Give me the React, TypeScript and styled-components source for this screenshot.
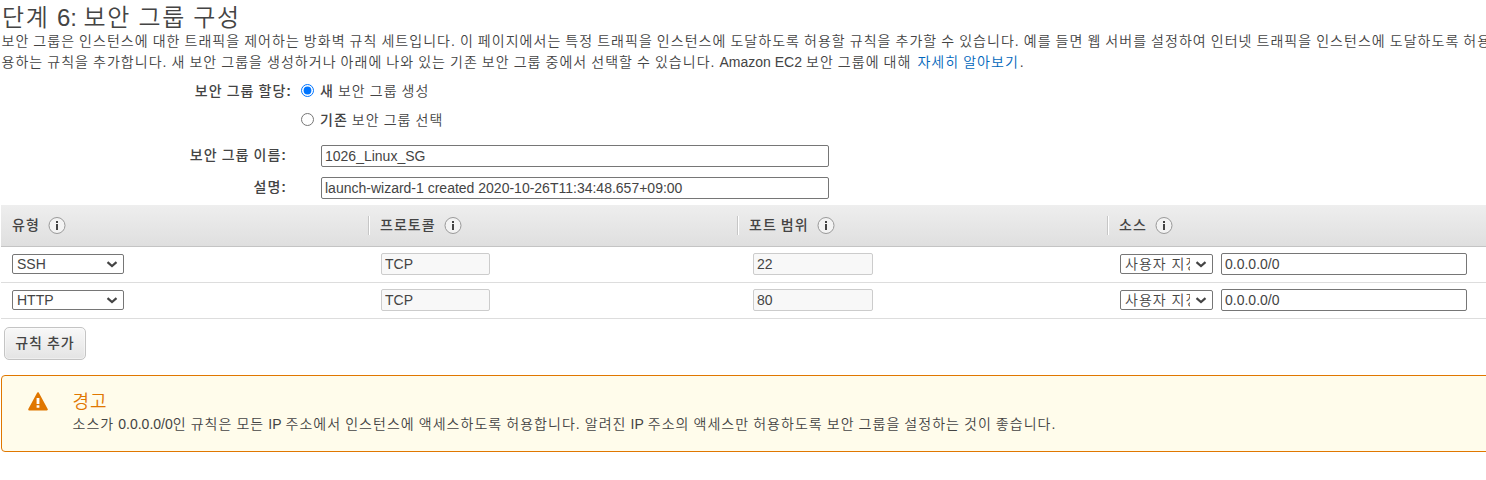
import React from "react";
import styled, { createGlobalStyle } from "styled-components";

const GlobalStyle = createGlobalStyle`
  * { box-sizing: border-box; }
  body {
    margin: 0;
    background: #fff;
    overflow: hidden;
    color: #444;
    font-family: "Liberation Sans", "Noto Sans CJK KR", sans-serif;
    font-size: 14px;
    font-weight: 350;
    letter-spacing: 1.04px;
    word-spacing: -0.94px;
  }
`;

const Page = styled.main`
  width: 1486px;
  height: 480px;
  overflow: hidden;
`;

const Latin = styled.span`
  letter-spacing: 0;
  word-spacing: 0;
`;

const Title = styled.h1`
  margin: 0;
  padding: 4px 0 0 2px;
  height: 31px;
  font-size: 24px;
  line-height: 27px;
  font-weight: 350;
  letter-spacing: 1.65px;
  word-spacing: -0.9px;
`;

const Line = styled.p`
  margin: 0;
  padding-left: 1.5px;
  line-height: 21px;
  white-space: nowrap;
`;

const Link = styled.a`
  color: #0066bb;
  margin: 0 1px 0 2px;
  text-decoration: none;
`;

const Form = styled.form`
  height: 132px;
  padding-top: 4px;
`;

const Field = styled.div<{ $height: number; $label: number; $gap: number }>`
  display: grid;
  grid-template-columns: ${(p) => p.$label}px auto;
  column-gap: ${(p) => p.$gap}px;
  align-items: center;
  justify-content: start;
  height: ${(p) => p.$height}px;
`;

const Label = styled.label<{ $lift?: number }>`
  font-weight: 500;
  text-align: right;
  line-height: 20px;
  padding-bottom: ${(p) => p.$lift ?? 0}px;
`;

const Choice = styled.label`
  display: flex;
  align-items: center;
  line-height: 20px;
  white-space: pre;
`;

const ChoiceText = styled.span`
  padding-bottom: 2px;
`;

const Strong = styled.b`
  font-weight: 500;
`;

const Colon = styled(Latin)`
  font-weight: 700;
`;

const Radio = styled.input`
  width: 13px;
  height: 13px;
  margin: 0 6px 2px 0;
`;

const Input = styled.input<{ $width: number }>`
  width: ${(p) => p.$width}px;
  height: 22px;
  padding: 1px 3px;
  border: 1px solid #767676;
  border-radius: 2px;
  background: #fff;
  color: #444;
  font: 14px "Liberation Sans", sans-serif;
  &:disabled {
    background: #f8f8f8;
    border-color: #ccc;
  }
`;

const SelectBox = styled.span<{ $width: number }>`
  position: relative;
  display: block;
  width: ${(p) => p.$width}px;
  height: 20px;
`;

const SelectControl = styled.select<{ $korean?: boolean }>`
  appearance: none;
  display: block;
  width: 100%;
  height: 20px;
  padding: 0 ${(p) => (p.$korean ? 22 : 18)}px 0 4px;
  border: 1px solid #767676;
  border-radius: 2px;
  background: #fff;
  color: #444;
  font: 350 14px/18px "Liberation Sans", "Noto Sans CJK KR", sans-serif;
  letter-spacing: ${(p) => (p.$korean ? 1 : 0)}px;
`;

const Chevron = styled.svg`
  position: absolute;
  right: 6px;
  top: 7px;
  pointer-events: none;
`;

const Rules = styled.section`
  margin-left: 1px;
`;

const columns = "367px 369px 370px 1fr";

const HeadRow = styled.div`
  display: grid;
  grid-template-columns: ${columns};
  align-items: center;
  height: 42px;
  background: linear-gradient(#eee, #dfdfdf);
  border-bottom: 1px solid #c4c4c4;
`;

const HeadCell = styled.div<{ $first?: boolean }>`
  display: flex;
  align-items: center;
  gap: 8px;
  height: 19px;
  padding-left: 11px;
  border-left: ${(p) => (p.$first ? "0" : "1px solid #c6c6c6")};
  box-shadow: ${(p) => (p.$first ? "none" : "inset 1px 0 #fff")};
  font-weight: 500;
`;

const HeadText = styled.span`
  padding-bottom: 4px;
`;

const RuleRow = styled.div`
  display: grid;
  grid-template-columns: ${columns};
  align-items: center;
  height: 36px;
  padding-bottom: 1px;
  border-bottom: 1px solid #ddd;
`;

const Cell = styled.div<{ $left: number }>`
  display: flex;
  align-items: center;
  gap: 8px;
  padding-left: ${(p) => p.$left}px;
`;

const AddButton = styled.button`
  display: block;
  width: 82px;
  height: 33px;
  margin: 8px 0 0 4px;
  padding: 0 0 4px;
  border: 1px solid #c4c4c4;
  border-radius: 5px;
  background: linear-gradient(#f8f8f8, #e4e4e4);
  box-shadow: inset 0 0 0 1px rgba(255, 255, 255, 0.4);
  color: #444;
  font: 500 14px "Liberation Sans", "Noto Sans CJK KR", sans-serif;
  letter-spacing: 1px;
  word-spacing: -0.9px;
`;

const Warning = styled.section`
  display: flex;
  width: 1500px;
  height: 77px;
  margin: 15px 0 0 1px;
  padding: 16px 0 0 26px;
  border: 1px solid #e07700;
  border-radius: 4px;
  background: #fffceb;
`;

const WarningBody = styled.div`
  padding-left: 24.5px;
`;

const WarningTitle = styled.h2`
  margin: 0;
  font-size: 18px;
  font-weight: 350;
  line-height: 21px;
  color: #e07700;
`;

const WarningText = styled(Line)`
  padding-left: 0;
  line-height: 22px;
`;

const InfoIcon = () => (
  <svg width="18" height="18" viewBox="0 0 18 18">
    <circle cx="9" cy="8.5" r="8" fill="#f3f3f3" stroke="#999" />
    <path d="M8 4h2v2H8zM8 7h2v6H8z" fill="#444" />
  </svg>
);

const WarningIcon = () => (
  <svg width="20" height="19" viewBox="0 0 20 19">
    <path d="M10 1.2 18.8 17.4H1.2Z" fill="#e07700" stroke="#e07700" strokeWidth="2" strokeLinejoin="round" />
    <path d="M8.6 6h2.8v6H8.6zM8.6 13.2h2.8v2.6H8.6z" fill="#fff" />
  </svg>
);

const Select = ({ width, value, korean }: { width: number; value: string; korean?: boolean }) => (
  <SelectBox $width={width}>
    <SelectControl $korean={korean}>
      <option>{value}</option>
    </SelectControl>
    <Chevron width="12" height="7" viewBox="0 0 12 7">
      <path d="M1.5 1.2 6 5 10.5 1.2" fill="none" stroke="#444" strokeWidth="2.2" />
    </Chevron>
  </SelectBox>
);

const HeadLabel = ({ text, first }: { text: string; first?: boolean }) => (
  <HeadCell $first={first}>
    <HeadText>{text}</HeadText>
    <InfoIcon />
  </HeadCell>
);

const rules = [
  { type: "SSH", port: "22" },
  { type: "HTTP", port: "80" },
];

export default function App() {
  return (
    <>
      <GlobalStyle />
      <Page>
        <Title>단계 <Latin>6: </Latin>보안 그룹 구성</Title>
        <Line>
          보안 그룹은 인스턴스에 대한 트래픽을 제어하는 방화벽 규칙 세트입니다. 이 페이지에서는 특정 트래픽을 인스턴스에
          도달하도록 허용할 규칙을 추가할 수 있습니다. 예를 들면 웹 서버를 설정하여 인터넷 트래픽을 인스턴스에 도달하도록 허용
        </Line>
        <Line>
          용하는 규칙을 추가합니다. 새 보안 그룹을 생성하거나 아래에 나와 있는 기존 보안 그룹 중에서 선택할 수 있습니다.{" "}
          <Latin>Amazon EC2</Latin> 보안 그룹에 대해 <Link>자세히 알아보기</Link>.
        </Line>
        <Form>
          <Field $height={29} $label={291} $gap={10}>
            <Label $lift={2}>보안 그룹 할당<Colon>:</Colon></Label>
            <Choice>
              <Radio type="radio" name="group" defaultChecked />
              <ChoiceText><Strong>새</Strong> 보안 그룹 생성</ChoiceText>
            </Choice>
          </Field>
          <Field $height={29} $label={291} $gap={10}>
            <span />
            <Choice>
              <Radio type="radio" name="group" />
              <ChoiceText><Strong>기존</Strong> 보안 그룹 선택</ChoiceText>
            </Choice>
          </Field>
          <Field $height={42} $label={286} $gap={35}>
            <Label $lift={3}>보안 그룹 이름<Colon>:</Colon></Label>
            <Input $width={508} defaultValue="1026_Linux_SG" />
          </Field>
          <Field $height={21} $label={286} $gap={35}>
            <Label $lift={2}>설명<Colon>:</Colon></Label>
            <Input $width={508} defaultValue="launch-wizard-1 created 2020-10-26T11:34:48.657+09:00" />
          </Field>
        </Form>
        <Rules>
          <HeadRow>
            <HeadLabel first text="유형" />
            <HeadLabel text="프로토콜" />
            <HeadLabel text="포트 범위" />
            <HeadLabel text="소스" />
          </HeadRow>
          {rules.map((rule) => (
            <RuleRow key={rule.type}>
              <Cell $left={11}><Select width={112} value={rule.type} /></Cell>
              <Cell $left={13}><Input $width={109} disabled defaultValue="TCP" /></Cell>
              <Cell $left={16}><Input $width={120} disabled defaultValue={rule.port} /></Cell>
              <Cell $left={13}>
                <Select width={93} value="사용자 지정" korean />
                <Input $width={246} defaultValue="0.0.0.0/0" />
              </Cell>
            </RuleRow>
          ))}
        </Rules>
        <AddButton>규칙 추가</AddButton>
        <Warning>
          <WarningIcon />
          <WarningBody>
            <WarningTitle>경고</WarningTitle>
            <WarningText>
              소스가 <Latin>0.0.0.0/0</Latin>인 규칙은 모든 <Latin>IP</Latin> 주소에서 인스턴스에 액세스하도록 허용합니다. 알려진{" "}
              <Latin>IP</Latin> 주소의 액세스만 허용하도록 보안 그룹을 설정하는 것이 좋습니다.
            </WarningText>
          </WarningBody>
        </Warning>
      </Page>
    </>
  );
}
